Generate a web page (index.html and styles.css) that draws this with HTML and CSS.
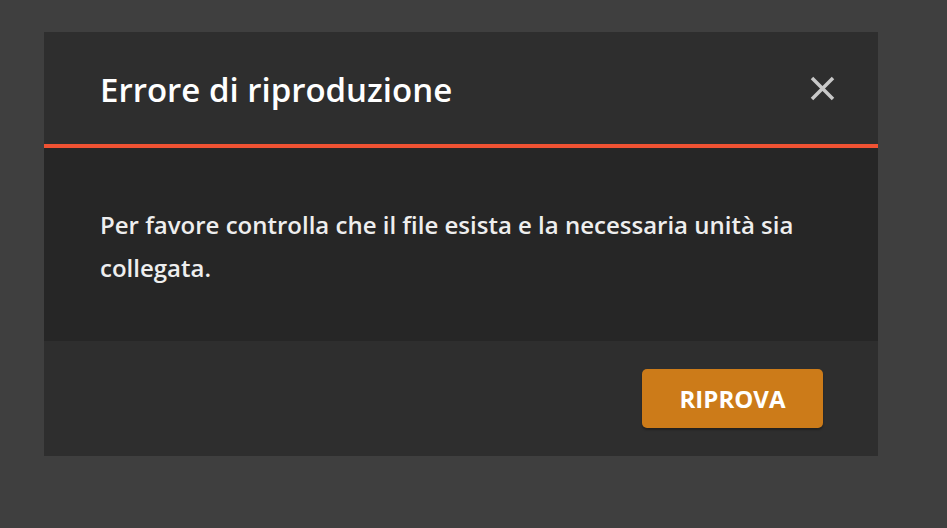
FILE: index.html
```html
<!DOCTYPE html>
<html lang="it">
<head>
<meta charset="utf-8">
<link rel="stylesheet" href="styles.css">
</head>
<body>
<div class="modal">
  <div class="modal-header">
    <h1 class="modal-title">Errore di riproduzione</h1>
    <button class="close-btn" aria-label="Chiudi">
      <svg width="25" height="25" viewBox="0 0 25 25"><path d="M2 2L23 23M23 2L2 23" stroke="#c8c8c8" stroke-width="3.5" stroke-linecap="butt"/></svg>
    </button>
  </div>
  <div class="modal-body">
    <p class="modal-text">Per favore controlla che il file esista e la necessaria unità sia collegata.</p>
  </div>
  <div class="modal-footer">
    <button class="retry-btn">RIPROVA</button>
  </div>
</div>
</body>
</html>
```
FILE: styles.css
```css
html, body {
  margin: 0;
  padding: 0;
  background: #3f3f3f;
  font-family: "Open Sans", sans-serif;
}
body {
  padding: 32px 0 0 44px;
  height: 528px;
  box-sizing: border-box;
}
.modal {
  width: 834px;
  display: flex;
  flex-direction: column;
}
.modal-header {
  background: #2e2e2e;
  height: 112px;
  border-bottom: 4px solid #f05233;
  display: flex;
  align-items: center;
  justify-content: space-between;
  padding: 0 43px 0 56px;
  box-sizing: content-box;
}
.modal-title {
  margin: 0;
  color: #ffffff;
  font-size: 33px;
  font-weight: 600;
  line-height: 44px;
  padding-top: 4px;
}
.close-btn {
  background: none;
  border: 0;
  padding: 0;
  width: 25px;
  height: 25px;
  display: flex;
}
.modal-body {
  background: #262626;
  height: 193px;
  padding: 0 56px;
  box-sizing: border-box;
  display: flex;
  align-items: center;
}
.modal-text {
  margin: 0;
  color: #eeeeee;
  font-size: 24px;
  font-weight: 600;
  line-height: 43px;
  padding-top: 2px;
}
.modal-footer {
  background: #2e2e2e;
  height: 115px;
  display: flex;
  justify-content: flex-end;
  align-items: flex-start;
  padding: 28px 55px 0 0;
  box-sizing: border-box;
}
.retry-btn {
  background: #cc7b19;
  color: #ffffff;
  border: 0;
  border-radius: 5px;
  width: 181px;
  height: 59px;
  font-family: "Open Sans", sans-serif;
  font-size: 24px;
  font-weight: 700;
  padding: 0;
  box-shadow: 0 2px 2px rgba(0,0,0,0.3);
}
```
